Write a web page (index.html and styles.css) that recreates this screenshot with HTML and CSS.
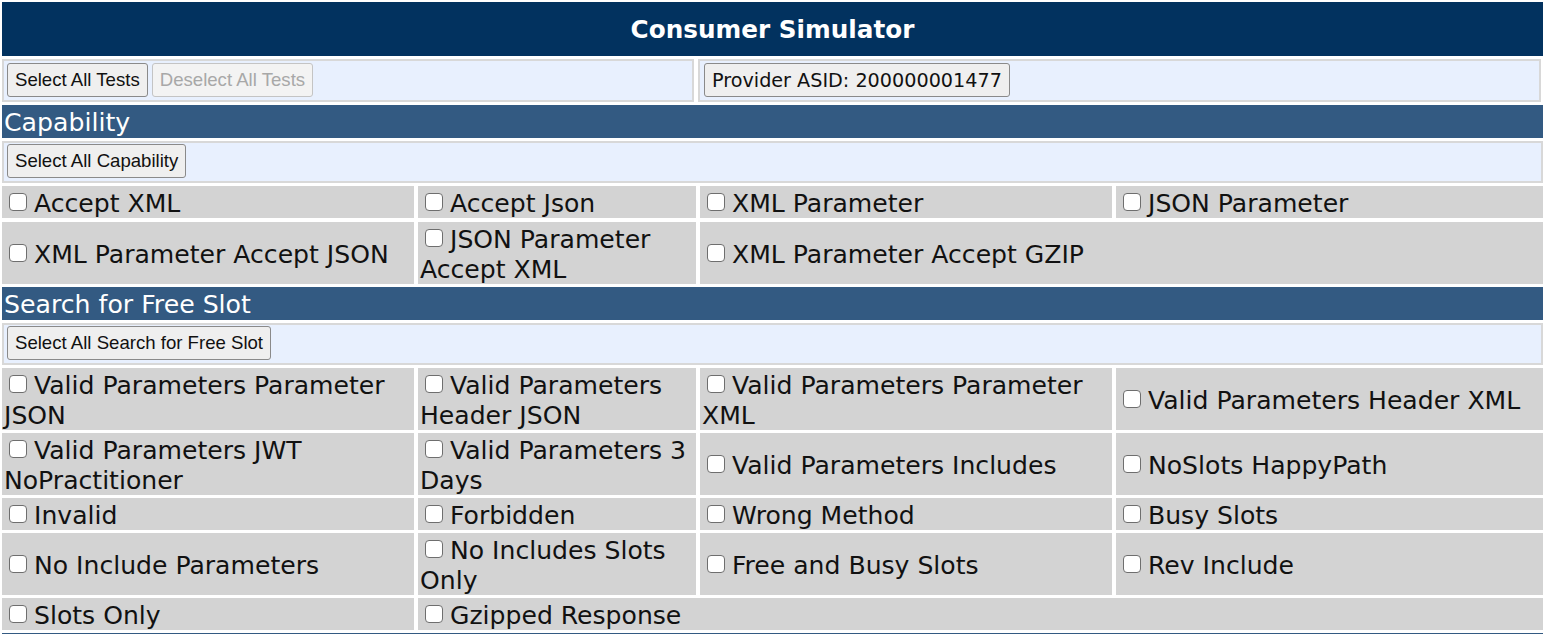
FILE: index.html
```html
<!DOCTYPE html>
<html>
<head>
<meta charset="utf-8">
<title>Consumer Simulator</title>
<link rel="stylesheet" href="styles.css">
</head>
<body>
<div class="page">
  <div class="title">Consumer Simulator</div>
  <div class="toolbar">
    <div class="panel panel-left">
      <button class="btn">Select All Tests</button>
      <button class="btn btn-disabled" disabled>Deselect All Tests</button>
    </div>
    <div class="panel panel-right">
      <button class="btn btn-asid">Provider ASID: 200000001477</button>
    </div>
  </div>

  <div class="section-head">Capability</div>
  <div class="panel"><button class="btn">Select All Capability</button></div>
  <div class="grid grid-capability">
    <div class="cell"><span class="item"><span class="cb"></span>Accept XML</span></div>
    <div class="cell"><span class="item"><span class="cb"></span>Accept Json</span></div>
    <div class="cell"><span class="item"><span class="cb"></span>XML Parameter</span></div>
    <div class="cell"><span class="item"><span class="cb"></span>JSON Parameter</span></div>
    <div class="cell"><span class="item"><span class="cb"></span>XML Parameter Accept JSON</span></div>
    <div class="cell"><span class="item"><span class="cb"></span>JSON Parameter Accept XML</span></div>
    <div class="cell span-2"><span class="item"><span class="cb"></span>XML Parameter Accept GZIP</span></div>
  </div>

  <div class="section-head">Search for Free Slot</div>
  <div class="panel"><button class="btn">Select All Search for Free Slot</button></div>
  <div class="grid">
    <div class="cell"><span class="item"><span class="cb"></span>Valid Parameters Parameter JSON</span></div>
    <div class="cell"><span class="item"><span class="cb"></span>Valid Parameters Header JSON</span></div>
    <div class="cell"><span class="item"><span class="cb"></span>Valid Parameters Parameter XML</span></div>
    <div class="cell"><span class="item"><span class="cb"></span>Valid Parameters Header XML</span></div>
    <div class="cell"><span class="item"><span class="cb"></span>Valid Parameters JWT NoPractitioner</span></div>
    <div class="cell"><span class="item"><span class="cb"></span>Valid Parameters 3 Days</span></div>
    <div class="cell"><span class="item"><span class="cb"></span>Valid Parameters Includes</span></div>
    <div class="cell"><span class="item"><span class="cb"></span>NoSlots HappyPath</span></div>
    <div class="cell"><span class="item"><span class="cb"></span>Invalid</span></div>
    <div class="cell"><span class="item"><span class="cb"></span>Forbidden</span></div>
    <div class="cell"><span class="item"><span class="cb"></span>Wrong Method</span></div>
    <div class="cell"><span class="item"><span class="cb"></span>Busy Slots</span></div>
    <div class="cell"><span class="item"><span class="cb"></span>No Include Parameters</span></div>
    <div class="cell"><span class="item"><span class="cb"></span>No Includes Slots Only</span></div>
    <div class="cell"><span class="item"><span class="cb"></span>Free and Busy Slots</span></div>
    <div class="cell"><span class="item"><span class="cb"></span>Rev Include</span></div>
    <div class="cell"><span class="item"><span class="cb"></span>Slots Only</span></div>
    <div class="cell span-3"><span class="item"><span class="cb"></span>Gzipped Response</span></div>
  </div>

  <div class="section-head section-next"></div>
</div>
</body>
</html>
```

FILE: styles.css
```css
html, body {
  margin: 0;
  padding: 0;
  background: #ffffff;
}
body {
  padding: 2px 2px 0 2px;
  font-family: "DejaVu Sans", Verdana, sans-serif;
  color: #111111;
}
.page {
  display: flex;
  flex-direction: column;
  gap: 3px;
}
.title {
  background: #02325f;
  color: #ffffff;
  font-weight: bold;
  font-size: 24.7px;
  height: 54px;
  display: flex;
  align-items: center;
  justify-content: center;
}
.toolbar {
  display: flex;
  gap: 4px;
}
.toolbar .panel {
  height: 43px;
  padding-top: 2px;
}
.panel {
  background: #e8f0fe;
  border: 2px solid #d8d8d8;
  padding: 1px 3px;
  height: 42px;
  box-sizing: border-box;
  display: flex;
  align-items: flex-start;
  gap: 4px;
}
.panel-left {
  width: 692px;
  flex: none;
}
.panel-right {
  flex: 1;
  margin-right: 2px;
  padding-left: 4px;
}
.btn {
  font-family: "Liberation Sans", Arial, sans-serif;
  font-size: 18.6px;
  height: 34px;
  padding: 0 7px;
  margin: 0;
  background: #efefef;
  color: #111111;
  border: 1px solid #8a8a8a;
  border-radius: 3px;
}
.btn-disabled {
  color: #a8a8a8;
  border-color: #c4c4c4;
  background: #f3f3f3;
}
.btn-asid {
  font-family: "DejaVu Sans", Verdana, sans-serif;
  font-size: 19.2px;
  padding: 0 7px;
}
.section-head {
  background: #335a82;
  color: #ffffff;
  font-size: 25.2px;
  height: 33px;
  box-sizing: border-box;
  padding: 2px 0 0 2px;
  line-height: 31px;
}
.grid {
  display: grid;
  grid-template-columns: 412px 278px 412px 1fr;
  gap: 3px 4px;
}
.grid-capability {
  row-gap: 4px;
}
.cell {
  background: #d3d3d3;
  min-height: 32px;
  padding: 1px 2px;
  box-sizing: border-box;
  font-size: 25.1px;
  line-height: 30px;
  display: flex;
  align-items: center;
}
.span-2 {
  grid-column: span 2;
}
.span-3 {
  grid-column: span 3;
}
.item {
  display: block;
  padding-top: 2px;
  margin-bottom: -2px;
}
.cb {
  display: inline-block;
  width: 18px;
  height: 18px;
  box-sizing: border-box;
  border: 1px solid #6e6e6e;
  border-radius: 4px;
  background: #ffffff;
  margin: 0 7px 0 5px;
  vertical-align: 1px;
}
```
